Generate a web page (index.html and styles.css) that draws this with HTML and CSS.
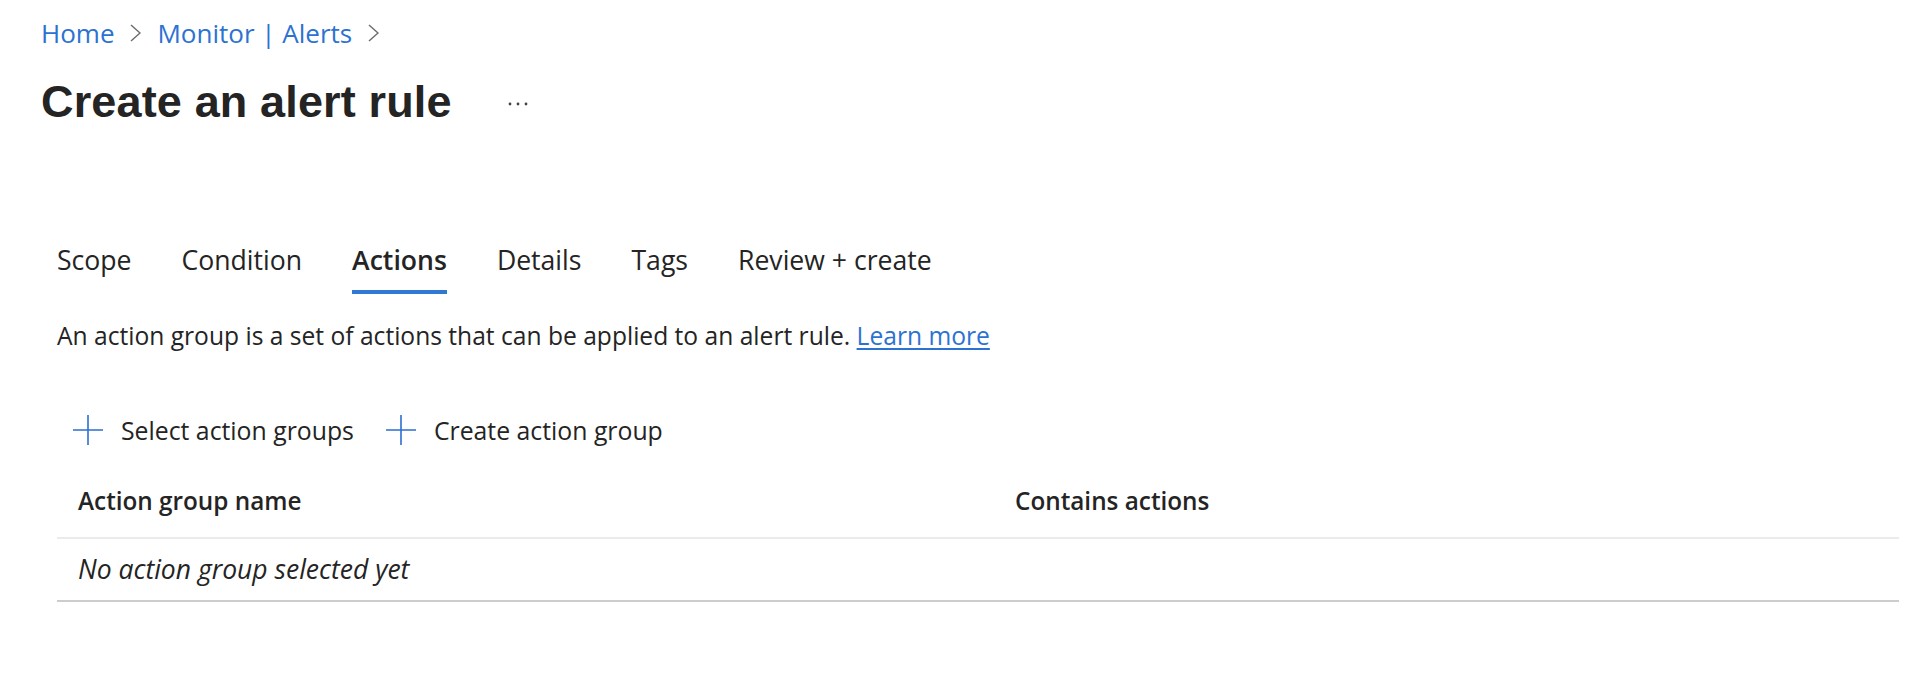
FILE: index.html
```html
<!DOCTYPE html>
<html lang="en">
<head>
<meta charset="utf-8">
<title>Create an alert rule</title>
<link rel="stylesheet" href="styles.css">
</head>
<body>
<div class="page">
  <nav class="breadcrumb">
    <a class="crumb" href="#">Home</a>
    <svg class="chev" width="11" height="18" viewBox="0 0 11 18"><path d="M1 1 L10 9 L1 17" fill="none" stroke="#6b6b6b" stroke-width="1.4"/></svg>
    <a class="crumb" href="#">Monitor | Alerts</a>
    <svg class="chev" width="11" height="18" viewBox="0 0 11 18"><path d="M1 1 L10 9 L1 17" fill="none" stroke="#6b6b6b" stroke-width="1.4"/></svg>
  </nav>
  <header class="title-row">
    <h1 class="title">Create an alert rule</h1>
    <svg class="more" width="22" height="6" viewBox="0 0 22 6"><circle cx="3" cy="3" r="1.4" fill="#444"/><circle cx="11" cy="3" r="1.4" fill="#444"/><circle cx="19" cy="3" r="1.4" fill="#444"/></svg>
  </header>
  <div class="content">
    <div class="tabs">
      <div class="tab">Scope</div>
      <div class="tab">Condition</div>
      <div class="tab active">Actions</div>
      <div class="tab">Details</div>
      <div class="tab">Tags</div>
      <div class="tab">Review + create</div>
    </div>
    <p class="desc">An action group is a set of actions that can be applied to an alert rule. <a class="link" href="#">Learn more</a></p>
    <div class="commands">
      <div class="cmd">
        <svg class="plus" width="30" height="30" viewBox="0 0 30 30"><path d="M15 0 V30 M0 15 H30" stroke="#2c6fd1" stroke-width="1.6" fill="none"/></svg>
        <span>Select action groups</span>
      </div>
      <div class="cmd">
        <svg class="plus" width="30" height="30" viewBox="0 0 30 30"><path d="M15 0 V30 M0 15 H30" stroke="#2c6fd1" stroke-width="1.6" fill="none"/></svg>
        <span>Create action group</span>
      </div>
    </div>
    <div class="table">
      <div class="thead">
        <div class="th">Action group name</div>
        <div class="th">Contains actions</div>
      </div>
      <div class="trow">
        <div class="td empty">No action group selected yet</div>
      </div>
    </div>
  </div>
</div>
</body>
</html>
```

FILE: styles.css
```css
* { box-sizing: border-box; }
html, body { margin: 0; padding: 0; background: #ffffff; }
body {
  font-family: "Open Sans", "Noto Sans", "Liberation Sans", sans-serif;
  color: #242424;
  width: 1932px;
  height: 684px;
  overflow: hidden;
}
.page { padding: 16px 0 0 41px; }

.breadcrumb {
  display: flex;
  align-items: center;
  height: 34px;
  font-size: 26px;
  line-height: 34px;
}
.crumb { color: #2c72d1; text-decoration: none; }
.chev { margin: 0 16px 0 16px; }

.title-row {
  display: flex;
  align-items: center;
  margin-top: 27px;
  height: 50px;
}
.title {
  margin: 0;
  font-family: "Liberation Sans", Arial, sans-serif;
  font-weight: 700;
  font-size: 45px;
  line-height: 50px;
  color: #242424;
  letter-spacing: 0.15px;
}
.more { margin-left: 55px; margin-top: 4px; }

.content { padding-left: 16px; padding-right: 33px; }

.tabs {
  display: flex;
  gap: 50px;
  margin-top: 116px;
}
.tab {
  font-size: 26.6px;
  line-height: 34px;
  padding-bottom: 13px;
  border-bottom: 4px solid transparent;
}
.tab.active {
  font-weight: 600;
  border-bottom-color: #2f78d4;
}

.desc {
  margin: 26px 0 0 0;
  font-size: 24.6px;
  line-height: 32px;
}
.link { color: #2c72d1; text-decoration: underline; text-underline-offset: 3px; }

.commands {
  display: flex;
  gap: 32px;
  margin-top: 61px;
  padding-left: 16px;
  height: 34px;
}
.cmd {
  display: flex;
  align-items: center;
  gap: 18px;
  font-size: 24.8px;
  line-height: 34px;
}
.plus { flex: none; }

.table { margin-top: 37px; }
.thead {
  display: grid;
  grid-template-columns: 937px 1fr;
  padding-bottom: 19px;
  border-bottom: 2px solid #ebebeb;
}
.th {
  padding-left: 21px;
  font-size: 24.3px;
  line-height: 34px;
  font-weight: 600;
}
.trow {
  padding: 13px 0 14px 0;
  border-bottom: 2px solid #cccccc;
}
.td {
  padding-left: 21px;
  font-size: 26.5px;
  line-height: 34px;
}
.td.empty { font-style: italic; }
```
